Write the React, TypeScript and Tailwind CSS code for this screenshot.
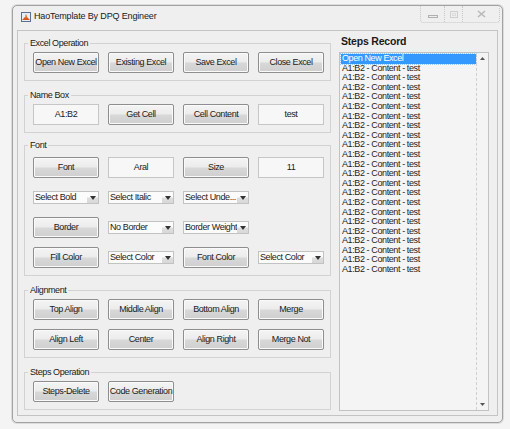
import React from "react";

const BTN =
  "h-[21px] rounded-[2px] border border-[#8e8e8e] bg-[linear-gradient(to_bottom,#f4f4f4_0%,#ececec_48%,#d8d8d8_52%,#cfcfcf_100%)] flex items-center justify-center text-[#1a1a1a] shadow-[inset_0_0_0_1px_#fafafa]";
const FIELD =
  "h-[21px] border border-[#c6c6c6] bg-[#f7f7f7] flex items-center justify-center text-[#1a1a1a]";
const COLS = "grid grid-cols-[66px_66px_66px_66px] gap-x-[9px] pl-[8px]";

function Btn({ label }: { label: string }) {
  return <div className={BTN}>{label}</div>;
}

function Field({ value }: { value: string }) {
  return <div className={FIELD}>{value}</div>;
}

function Drop({ value }: { value: string }) {
  return (
    <div className="h-[13px] self-center flex items-stretch border border-[#c2c2c2] bg-[#fbfbfb] text-[#1a1a1a]">
      <div className="flex-1 pl-[1px] leading-[11px] whitespace-nowrap overflow-hidden">{value}</div>
      <div className="w-[11px] flex items-center justify-center bg-[linear-gradient(to_bottom,#fbfbfb_0%,#fbfbfb_45%,#dedede_55%,#d8d8d8_100%)]">
        <svg width="6" height="4" viewBox="0 0 6 4">
          <path d="M0 0h6L3 4z" fill="#333" />
        </svg>
      </div>
    </div>
  );
}

function Group({
  title,
  className,
  children,
}: {
  title: string;
  className?: string;
  children: React.ReactNode;
}) {
  return (
    <fieldset className={`border border-[#d2d2d2] pb-[7px] ${className ?? ""}`}>
      <legend className="ml-[3px] px-[2px] leading-[10px] text-[#1a1a1a]">{title}</legend>
      {children}
    </fieldset>
  );
}

const steps = Array.from({ length: 22 }, () => "A1:B2 - Content - test");

export default function App() {
  return (
    <div className="w-[510px] h-[429px] bg-[#f4f4f4] pl-[12px] pt-[5px] pr-[7px] pb-[6px] font-['Liberation_Sans',Arial,sans-serif] text-[9px] tracking-[-0.4px]">
      <div className="h-full flex flex-col rounded-[5px] border border-[#a2a2a2] bg-[#efefef] shadow-[0_0_0_1px_#dcdcdc]">
        {/* title bar */}
        <div className="h-[24px] flex items-start">
          <div className="flex items-center h-[22px] pl-[8px] gap-[3px]">
            <svg width="10" height="10" viewBox="0 0 10 10">
              <rect x="0.5" y="0.5" width="9" height="9" fill="#e8eef8" stroke="#5b6f92" />
              <path d="M1 8 L4 5 L5 2 L6 5 L9 8 Z" fill="#d8551c" />
              <path d="M4 5 L5 2 L5.5 6 Z" fill="#f1a33a" />
            </svg>
            <span className="text-[9px] tracking-[-0.15px] text-[#202020]">HaoTemplate By DPQ Engineer</span>
          </div>
          <div className="ml-auto mr-[2px] flex h-[17px] border border-t-0 border-[#c8c8c8] border-dotted rounded-b-[3px]">
            <div className="w-[24px] flex items-center justify-center border-r border-dotted border-[#c8c8c8]">
              <div className="w-[10px] h-[3px] border border-[#b0b0b0] mt-[4px]" />
            </div>
            <div className="w-[18px] flex items-center justify-center border-r border-dotted border-[#c8c8c8]">
              <div className="w-[8px] h-[7px] border border-[#cfcfcf] flex items-center justify-center">
                <div className="w-[4px] h-[3px] border border-[#dcdcdc]" />
              </div>
            </div>
            <div className="w-[36px] flex items-center justify-center">
              <svg width="9" height="8" viewBox="0 0 9 8">
                <path d="M1 1 L8 7 M8 1 L1 7" stroke="#b8b8b8" strokeWidth="1.6" />
              </svg>
            </div>
          </div>
        </div>

        {/* content */}
        <div className="flex-1 mx-[4px] mb-[6px] border border-[#c4c4c4] flex">
          {/* left column */}
          <div className="w-[307px] ml-[6px] pt-[7px] flex flex-col">
            <Group title="Excel Operation">
              <div className={`${COLS} pt-[4px]`}>
                <Btn label="Open New Excel" />
                <Btn label="Existing Excel" />
                <Btn label="Save Excel" />
                <Btn label="Close Excel" />
              </div>
            </Group>

            <Group title="Name Box" className="mt-[9px]">
              <div className={`${COLS} pt-[4px]`}>
                <Field value="A1:B2" />
                <Btn label="Get Cell" />
                <Btn label="Cell Content" />
                <Field value="test" />
              </div>
            </Group>

            <Group title="Font" className="mt-[7px]">
              <div className={`${COLS} auto-rows-[21px] gap-y-[9px] pt-[7px]`}>
                <Btn label="Font" />
                <Field value="Aral" />
                <Btn label="Size" />
                <Field value="11" />

                <Drop value="Select Bold" />
                <Drop value="Select Italic" />
                <Drop value="Select Unde..." />
                <div />

                <Btn label="Border" />
                <Drop value="No Border" />
                <Drop value="Border Weight" />
                <div />

                <Btn label="Fill Color" />
                <Drop value="Select Color" />
                <Btn label="Font Color" />
                <Drop value="Select Color" />
              </div>
            </Group>

            <Group title="Alignment" className="mt-[9px]">
              <div className={`${COLS} gap-y-[9px] pt-[4px]`}>
                <Btn label="Top Align" />
                <Btn label="Middle Align" />
                <Btn label="Bottom Align" />
                <Btn label="Merge" />
                <Btn label="Align Left" />
                <Btn label="Center" />
                <Btn label="Align Right" />
                <Btn label="Merge Not" />
              </div>
            </Group>

            <Group title="Steps Operation" className="mt-[9px]">
              <div className={`${COLS} pt-[4px]`}>
                <Btn label="Steps-Delete" />
                <Btn label="Code Generation" />
              </div>
            </Group>
          </div>

          {/* right column */}
          <div className="ml-[8px] w-[150px] pt-[4px] pb-[4px] flex flex-col">
            <div className="h-[13px] pl-[2px] text-[10.5px] font-bold tracking-[-0.2px] leading-[13px] text-[#1a1a1a]">
              Steps Record
            </div>
            <div className="mt-[4px] flex-1 flex border border-[#c2c2c2] bg-[#f4f4f4]">
              <div className="flex-1 pt-[1px] pl-[1px] text-[#1e1e1e]">
                <div className="h-[9.6px] leading-[9.6px] bg-[#3399ff] text-white pl-[1px] outline-1 outline-dotted outline-[#9cc8f5]">
                  Open New Excel
                </div>
                {steps.map((s, i) => (
                  <div key={i} className="h-[9.6px] leading-[9.6px] pl-[1px] whitespace-nowrap">
                    {s}
                  </div>
                ))}
              </div>
              <div className="w-[12px] border-l border-dashed border-[#cfcfcf] flex flex-col items-center justify-between py-[4px]">
                <svg width="5" height="3" viewBox="0 0 5 3">
                  <path d="M0 3h5L2.5 0z" fill="#555" />
                </svg>
                <svg width="5" height="3" viewBox="0 0 5 3">
                  <path d="M0 0h5L2.5 3z" fill="#555" />
                </svg>
              </div>
            </div>
          </div>
        </div>
      </div>
    </div>
  );
}
